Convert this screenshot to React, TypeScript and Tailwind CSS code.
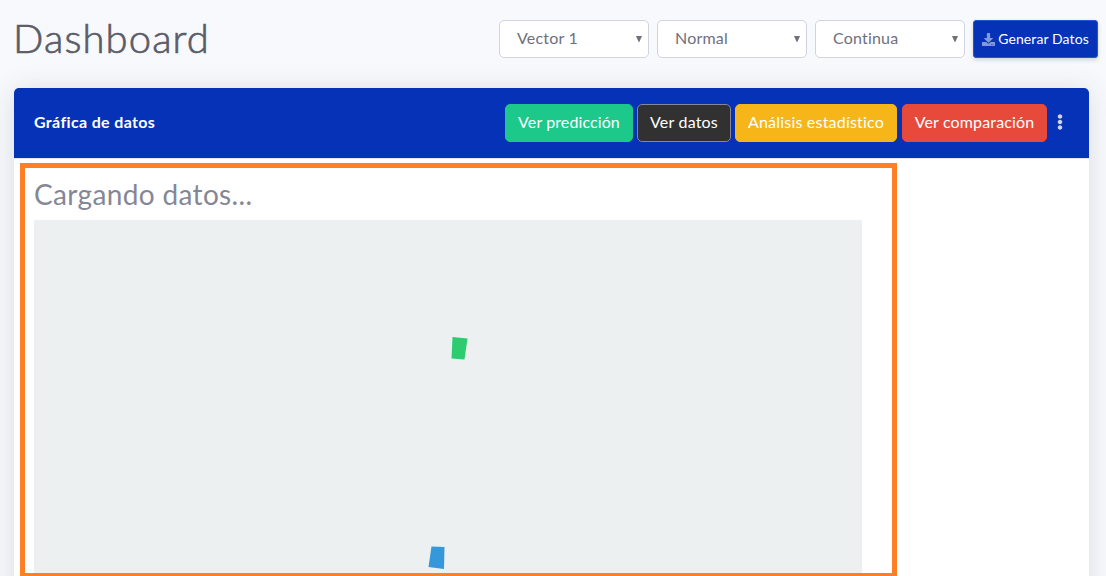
import { FaDownload, FaEllipsisV } from "react-icons/fa";

function Select({ label }: { label: string }) {
  return (
    <button className="flex h-[38px] w-[150px] items-center justify-between rounded-[5px] border border-[#d1d3e2] bg-white pr-[6px] pl-[17px] text-[#6e707e]">
      <span className="pb-[2px] text-[16px] leading-6 tracking-[0.2px]">{label}</span>
      <svg className="h-[6px] w-[6px]" viewBox="0 0 6 6" fill="#6e707e">
        <path d="M0 0h6L3.3 6h-.6z" />
      </svg>
    </button>
  );
}

const actions = [
  { label: "Ver predicción", style: "w-[128px] bg-[#1cc88a] border-[#1cc88a] mr-1 tracking-[0.1px]" },
  { label: "Ver datos", style: "w-[94px] bg-[#313131] border-[#858796] mr-1 tracking-[0.2px]" },
  { label: "Análisis estadístico", style: "w-[162px] bg-[#f6b61a] border-[#f6b61a] mr-[5px] tracking-[0.2px]" },
  { label: "Ver comparación", style: "w-[145px] bg-[#e74a3b] border-[#e74a3b] tracking-[0.15px]" },
];

export default function App() {
  return (
    <div className="flex h-[576px] w-[1106px] flex-col overflow-hidden bg-[#f8f9fc] font-['Lato',sans-serif]">
      <div className="h-0 shadow-[0_2px_28px_0_rgba(58,59,69,0.15)]" />
      <header className="flex h-[88px] shrink-0 items-start justify-between pt-5 pr-2 pl-[13px]">
        <h1 className="-mt-[6px] text-[40px] leading-[48px] font-light tracking-[1.1px] whitespace-nowrap text-[#5a5c69] [-webkit-text-stroke:0.7px_#5a5c69]">
          Dashboard
        </h1>
        <div className="flex gap-2">
          <Select label="Vector 1" />
          <Select label="Normal" />
          <Select label="Continua" />
          <button className="flex h-[38px] w-[125px] items-center justify-center gap-[3px] rounded-[3px] border border-[#2653d4] bg-[#0632b8] text-[14px] whitespace-nowrap text-white shadow-[0_2px_4px_0_rgba(58,59,69,0.2)]">
            <FaDownload className="size-[13px] text-white/50" />
            <span className="pb-[2px] tracking-[0.1px]">Generar Datos</span>
          </button>
        </div>
      </header>
      <main className="ml-[14px] flex h-[600px] w-[1075px] shrink-0 flex-col rounded-[5px] bg-white shadow-[0_2px_28px_0_rgba(58,59,69,0.15)]">
        <div className="flex h-[71px] shrink-0 items-center justify-between rounded-t-[5px] border-b border-[#e3e6f0] bg-[#0632b8] bg-clip-padding pr-[21px] pl-5">
          <h2 className="pb-[2px] text-[16px] font-bold tracking-[0.35px] whitespace-nowrap text-white">Gráfica de datos</h2>
          <div className="flex items-center">
            {actions.map((a) => (
              <button
                key={a.label}
                className={`flex h-[38px] items-center justify-center rounded-[5px] border pb-[2px] text-[16px] whitespace-nowrap text-white ${a.style}`}
              >
                {a.label}
              </button>
            ))}
            <FaEllipsisV className="mb-[2px] ml-[5px] size-4 text-[#d1d3e2]" />
          </div>
        </div>
        <section className="mt-1 ml-[6px] h-[415px] w-[877px] border-[5px] border-[#ff7f27] pt-[5px] pl-[9px]">
          <h3 className="h-[47px] text-[28px] leading-[42px] font-normal tracking-[0.35px] text-[#858796]">
            Cargando datos...
          </h3>
          <svg className="block h-[353px] w-[828px] bg-[#ecf0f1]" viewBox="0 0 828 353">
            <path d="M418.5 117l15 1.5-3 21-13-1z" fill="#2ecc71" />
            <path d="M397.5 326.5l13 .6-.5 22-15.5-2z" fill="#3498db" />
          </svg>
        </section>
      </main>
    </div>
  );
}
